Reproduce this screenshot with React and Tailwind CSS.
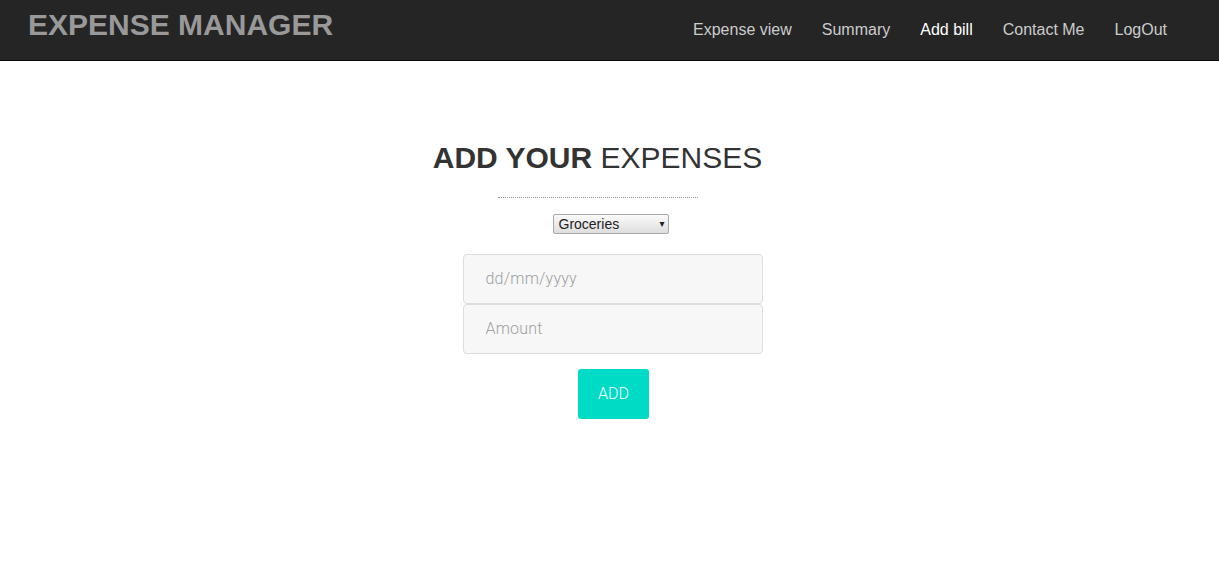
export default function App() {
  return (
    <div className="min-h-screen w-full bg-white font-['Liberation_Sans',Arial,sans-serif]">
      <nav className="h-[61px] bg-[#252525] border-b border-[#080808] flex items-center justify-between pl-[28px] pr-[52px]">
        <a className="text-[30px] font-bold text-[#999] leading-none -mt-[10px]">EXPENSE MANAGER</a>
        <ul className="flex items-center gap-[30px] text-[16px] text-[#ccc]">
          <li>Expense view</li>
          <li>Summary</li>
          <li className="text-white">Add bill</li>
          <li>Contact Me</li>
          <li>LogOut</li>
        </ul>
      </nav>

      <main className="flex flex-col items-center pt-[80px]">
        <h1 className="text-[30px] text-[#333] leading-[34px] mr-[24px]">
          <span className="font-bold">ADD YOUR</span> EXPENSES
        </h1>
        <div className="w-[200px] border-t border-dotted border-[#999] mt-[22px] mr-[24px]" />
        <div className="relative flex mt-[16px] ml-[2px]">
          <select className="appearance-none w-[116px] h-[20px] text-[14px] leading-[18px] text-[#222] border border-[#a9a9a9] rounded-[2px] bg-gradient-to-b from-[#fafafa] to-[#dedede] pl-[5px] font-['Liberation_Sans',Arial,sans-serif]">
            <option>Groceries</option>
          </select>
          <span className="pointer-events-none absolute right-[4px] top-[5px] text-[10px] leading-none text-[#222] font-['DejaVu_Sans',sans-serif]">▾</span>
        </div>
        <form className="mt-[20px] flex flex-col items-center font-['Roboto',sans-serif]">
          <input
            placeholder="dd/mm/yyyy"
            className="ml-[6px] w-[300px] h-[50px] bg-[#f7f7f7] border border-[#ddd] rounded-[4px] px-[22px] pb-[1px] text-[16px] font-light tracking-[0.2px] placeholder:text-[#a0a0a0] outline-none"
          />
          <input
            placeholder="Amount"
            className="ml-[6px] w-[300px] h-[50px] bg-[#f7f7f7] border border-[#ddd] rounded-[4px] px-[22px] pb-[1px] text-[16px] font-light tracking-[0.2px] placeholder:text-[#a0a0a0] outline-none"
          />
          <button
            type="button"
            className="ml-[8px] mt-[15px] w-[71px] h-[50px] bg-[#00dbc5] rounded-[3px] text-white text-[16px] font-light"
          >
            ADD
          </button>
        </form>
      </main>
    </div>
  );
}
